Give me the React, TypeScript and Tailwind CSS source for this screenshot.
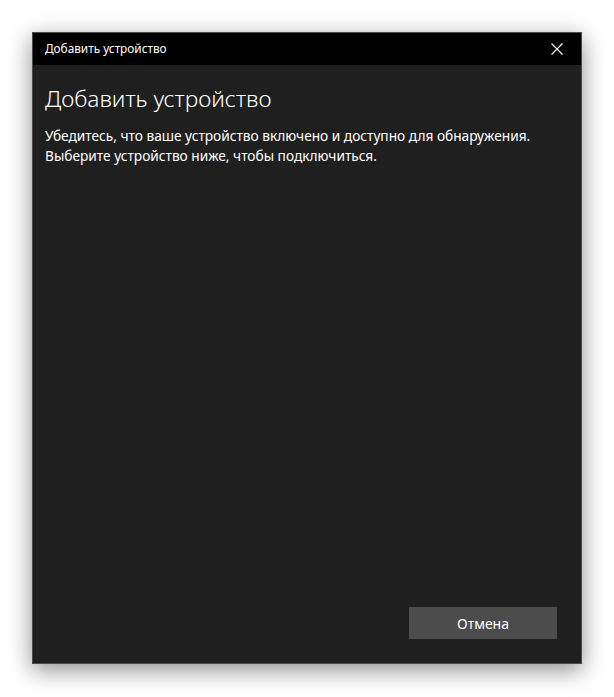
export default function App() {
  return (
    <main className="min-h-screen bg-white pl-8 pt-8 font-['Noto_Sans',sans-serif]">
      <div className="flex h-[632px] w-[550px] flex-col border border-[#4b4b4b] bg-[#1f1f1f] shadow-[0_6px_22px_rgba(0,0,0,0.45)]">
        <header className="flex h-[32px] shrink-0 items-center justify-between bg-black pl-3 pr-[18px]">
          <span className="text-[11.8px] text-white">Добавить устройство</span>
          <svg width="12" height="12" viewBox="0 0 12 12" className="text-white">
            <path d="M0.5 0.5 L11.5 11.5 M11.5 0.5 L0.5 11.5" stroke="currentColor" strokeWidth="1.1" />
          </svg>
        </header>

        <section className="flex flex-1 flex-col pl-3 pr-6 pt-[18px] pb-6">
          <h1 className="text-[22.7px] leading-8 font-light text-white">Добавить устройство</h1>
          <p className="mt-[11px] text-[13.7px] leading-5 text-white">
            Убедитесь, что ваше устройство включено и доступно для обнаружения.
            <br />
            Выберите устройство ниже, чтобы подключиться.
          </p>

          <div className="mt-auto flex justify-end">
            <button className="h-8 w-[148px] bg-[#4c4c4c] text-[14px] text-white">Отмена</button>
          </div>
        </section>
      </div>
    </main>
  );
}
